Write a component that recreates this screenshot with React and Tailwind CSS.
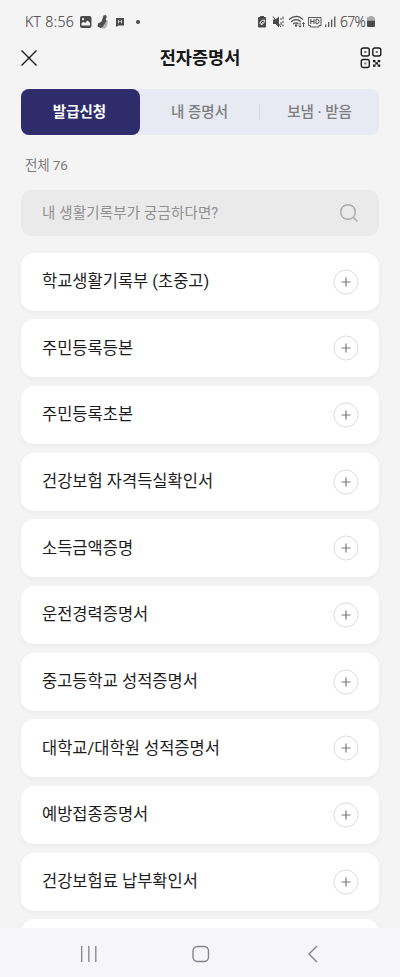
import React from "react";

const tabs = ["발급신청", "내 증명서", "보냄 · 받음"];

const certificates = [
  "학교생활기록부 (초중고)",
  "주민등록등본",
  "주민등록초본",
  "건강보험 자격득실확인서",
  "소득금액증명",
  "운전경력증명서",
  "중고등학교 성적증명서",
  "대학교/대학원 성적증명서",
  "예방접종증명서",
  "건강보험료 납부확인서",
  "",
];

function StatusBar() {
  return (
    <div className="flex h-[34px] shrink-0 items-end pb-1 pl-[25px] pr-6 text-[#4a4a4a]">
      <div className="flex h-4 w-full items-center justify-between">
        <div className="flex items-center">
          <span className="w-[54px] whitespace-nowrap font-['Open_Sans',sans-serif] text-[14px] font-light leading-4 tracking-[0.4px] [-webkit-text-stroke:0.2px_#4a4a4a]">
            KT 8:56
          </span>
          <svg className="shrink-0" width="66" height="16" viewBox="79 14 66 16" fill="none">
            <rect x="80" y="16" width="11.500" height="12" rx="2" fill="#4a4a4a" />
            <circle cx="83" cy="19.2" r="1.1" fill="#f4f4f4" />
            <path d="M81.500 25.500v-2.300l2-1.500 1.600 1.200 2.300-2.400 2.700 2.200v2.800z" fill="#f4f4f4" />
            <path d="M103.500 15.500l2.500-.5.8 2-1 2.500 1.200 1.500-3.500 6.500-3 .5-3-1.500.5-3 3.500-2z" fill="#505050" />
            <path d="M101.500 28.500l3.500-5 2-3.500 1 1.500-1 4.500-2 2.500z" fill="#b5b5b5" />
            <path d="M116 18h8v7.500h-5.500l-2.500 1.500z" fill="#4a4a4a" />
            <path d="M118.500 23.300v-3l1.500 1.500 1.500-1.500v3" stroke="#f4f4f4" strokeWidth="0.8" />
            <circle cx="138" cy="22" r="2" fill="#4a4a4a" />
          </svg>
        </div>
        <div className="flex items-center">
          <svg className="shrink-0" width="83" height="16" viewBox="257 14 83 16" fill="none" stroke="#4a4a4a">
            <path d="M260 16h4v1h1q1 0 1 1v8.500q0 1-1 1h-6q-1 0-1-1v-8.500q0-1 1-1h1z" fill="#4a4a4a" stroke="none" />
            <path d="M260 24c0-3 2-4 4.500-4 0 3-1.500 4.500-3.500 4.500l2-2.500" stroke="#f4f4f4" />
            <path d="M273 19.500h2.500l3.500-3v11l-3.500-3.500h-2.500z" fill="#4a4a4a" stroke="none" />
            <path d="M273 16.500l8 10.500M281 18v2M281 22v3M283 16.500v3M283 21v2M283 24.500v2" />
            <path d="M289 19.500c5-4 10-4 14 0M291.200 21.800c3.200-2.600 6.800-2.600 9.600 0M293.200 24c1.800-1.500 3.800-1.500 5.200 0" strokeWidth="1.200" />
            <circle cx="296" cy="25.500" r="1.200" fill="#4a4a4a" stroke="none" />
            <path d="M300 22.500v4.500M298.700 25.700l1.300 1.500 1.300-1.500M303.500 27v-4.500M302.200 24l1.300-1.500 1.300 1.500" strokeWidth="0.900" />
            <path d="M308.500 17.500h12.500v8h-2v1.500h-8.500v-1.500h-2z" strokeWidth="0.900" />
            <path d="M310.800 19v5M314 19v5M310.800 21.500h3.200M316 19.300v4.400h1.200q1.800 0 1.800-2.200t-1.800-2.200z" />
            <path d="M325.700 24.500v2.500M328.700 22v5M331.700 19.500v7.500M334.800 16.500v10.500" strokeWidth="1.200" />
          </svg>
          <span className="w-[26px] whitespace-nowrap font-['Open_Sans',sans-serif] text-[14px] font-light leading-4 tracking-[-0.7px] [-webkit-text-stroke:0.2px_#4a4a4a]">
            67%
          </span>
          <svg className="shrink-0" width="10" height="16" viewBox="366 14 10 16">
            <path d="M369 16h4v1h1q1 0 1 1v3h-8v-3q0-1 1-1h1z" fill="#aaa" />
            <path d="M367 20.800h8v5.200q0 1-1 1h-6q-1 0-1-1z" fill="#4a4a4a" />
          </svg>
        </div>
      </div>
    </div>
  );
}

function QrIcon() {
  return (
    <svg width="22" height="22" viewBox="0 0 22 22" fill="none" stroke="#1b1b1b" strokeWidth="1.400">
      <rect x="1.300" y="1" width="8" height="8" rx="2" />
      <rect x="12.800" y="1" width="8" height="8" rx="2" />
      <rect x="1.300" y="12.500" width="8" height="8" rx="2" />
      <path d="M4.200 5h2.200M15.700 5h2.200M4.200 16.500h2.200" stroke="#777" strokeWidth="2" />
      <path
        d="M13 13h2.500v2.300h-2.500zM17.700 13h2.500v2.300h-2.500zM15.300 15.200h2.600v2.400h-2.600zM13 17.500h2.500v2.300h-2.500zM17.700 17.500h2.500v2.300h-2.500z"
        fill="#1b1b1b"
        stroke="none"
      />
    </svg>
  );
}

function CertificateCard({ name }) {
  return (
    <li className="flex h-[58px] shrink-0 items-center justify-between rounded-[13px] bg-white pl-[21px] pr-5 shadow-[0_2px_5px_rgba(0,0,0,0.04)]">
      <span className="pt-px text-[16.5px] leading-6 text-[#1c1c1c]">{name}</span>
      <button aria-label="추가" className="flex h-[26px] w-[26px] items-center justify-center">
        <svg width="26" height="26" viewBox="0 0 26 26" fill="none">
          <circle cx="13" cy="13" r="12" stroke="#dcdcdc" />
          <path d="M8.500 13h9M13 8.500v9" stroke="#777" strokeWidth="1.200" />
        </svg>
      </button>
    </li>
  );
}

function App() {
  return (
    <div className="flex h-[977px] w-[400px] flex-col overflow-hidden bg-[#f4f4f4] font-[Roboto,'Noto_Sans_CJK_KR',sans-serif]">
      <StatusBar />

      <header className="flex h-[47px] shrink-0 items-center justify-between pl-5 pr-[18px]">
        <svg width="20" height="18" viewBox="0 0 20 18" stroke="#1b1b1b" strokeWidth="1.400">
          <path d="M1.500 1.500l15 15M16.500 1.500l-15 15" />
        </svg>
        <h1 className="text-[17.5px] font-bold leading-6 text-[#161616]">전자증명서</h1>
        <QrIcon />
      </header>

      <main className="flex min-h-0 flex-1 flex-col overflow-hidden px-[21px] pt-2">
        <nav className="flex h-[46px] shrink-0 items-center rounded-lg bg-[#e7eaf2]">
          {tabs.map((tab, i) => (
            <button
              key={tab}
              className={
                i === 0
                  ? "h-full w-[119px] rounded-lg bg-[#2e2c6b] pr-0.5 pt-px text-[14.5px] font-bold text-white"
                  : i === 1
                  ? "flex h-4 flex-1 items-center justify-center border-r border-[#d4d7df] pt-px text-[14.5px] font-medium leading-4 text-[#7d7d7d]"
                  : "flex h-4 flex-1 items-center justify-center pt-px text-[14.5px] font-medium leading-4 text-[#7d7d7d]"
              }
            >
              {tab}
            </button>
          ))}
        </nav>

        <p className="mt-5 shrink-0 pl-1 text-[13.5px] leading-5 tracking-[-0.15px] text-[#7c7c7c]">전체 76</p>

        <div className="mt-[15px] flex h-[46px] shrink-0 items-center justify-between rounded-[10px] bg-[#eaeaea] pl-[21px] pr-5">
          <span className="pt-px text-[14.5px] leading-5 tracking-[0.15px] text-[#8f8f8f]">내 생활기록부가 궁금하다면?</span>
          <svg width="20" height="20" viewBox="0 0 20 20" fill="none" stroke="#aaa" strokeWidth="1.400">
            <circle cx="9" cy="9" r="7.300" />
            <path d="M14 14l4.500 4.500" />
          </svg>
        </div>

        <ul className="mt-[16.6px] flex flex-col gap-[8.67px]">
          {certificates.map((name, i) => (
            <CertificateCard key={i} name={name} />
          ))}
        </ul>
      </main>

      <footer className="z-10 flex h-[49px] shrink-0 items-center bg-[#f6f6f8] pl-20 pt-[3px] text-[#858585]">
        <svg width="18" height="18" viewBox="0 0 18 18" stroke="currentColor" strokeWidth="1.300">
          <path d="M1.700 1v16M8.800 1v16M15.800 1v16" />
        </svg>
        <svg className="ml-[94px]" width="18" height="18" viewBox="0 0 18 18" fill="none" stroke="currentColor" strokeWidth="1.400">
          <rect x="1" y="1.500" width="15.500" height="15" rx="4.500" />
        </svg>
        <svg className="ml-[97px]" width="12" height="18" viewBox="0 0 12 18" fill="none" stroke="currentColor" strokeWidth="1.400">
          <path d="M10 1L2 9l8 8" />
        </svg>
      </footer>
    </div>
  );
}

export default App;
